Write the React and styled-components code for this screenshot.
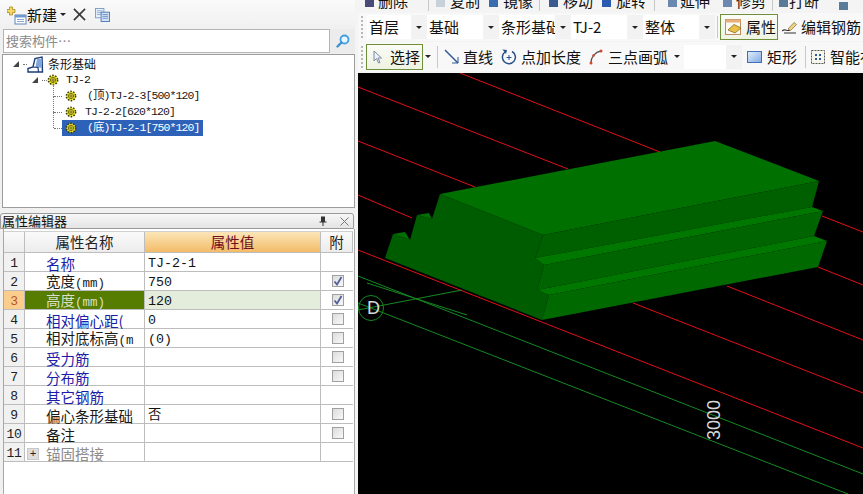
import React from "react";
import styled, { createGlobalStyle } from "styled-components";

const CJK = `"Noto Sans CJK SC", "Liberation Sans", sans-serif`;
const MONO = `"Liberation Mono", "Noto Sans CJK SC", monospace`;

const GlobalStyle = createGlobalStyle`
  * { margin: 0; padding: 0; box-sizing: border-box; }
  html, body { width: 863px; height: 494px; overflow: hidden; background: #f0f0f0; }
  body { font-family: ${CJK}; color: #111; }
`;

const Page = styled.div`
  display: grid;
  grid-template-columns: 355px 508px;
  width: 863px;
  height: 494px;
  overflow: hidden;
`;

/* left column */
const Side = styled.div`
  display: flex;
  flex-direction: column;
  height: 494px;
  background: #f0f0f0;
`;

const TopBar = styled.div`
  display: flex;
  align-items: center;
  height: 29px;
  padding-left: 7px;
  font-size: 15px;
  line-height: 20px;
  background: linear-gradient(#fafafa, #f0f0f0);
`;

const SearchRow = styled.div`
  display: flex;
  height: 24px;
  margin-left: 3px;
`;

const SearchInput = styled.div`
  width: 327px;
  border: 1px solid #b4b4b4;
  background: #fff;
  color: #8a8a8a;
  font-size: 13px;
  line-height: 21px;
  padding-left: 2px;
  white-space: nowrap;
`;

const SearchBtn = styled.div`
  width: 25px;
  display: flex;
  align-items: center;
  justify-content: center;
  background: #ececec;
`;

const TreeBox = styled.div`
  height: 154px;
  margin: 1px 0 0 2px;
  width: 353px;
  border: 1px solid #9c9c9c;
  background: #fff;
  padding-top: 1px;
`;

const TreeRow = styled.div`
  position: relative;
  display: flex;
  align-items: center;
  height: 16px;
  padding-left: ${(p) => p.$indent}px;
`;

const Twist = styled.span`
  width: 0;
  height: 0;
  margin-right: 3px;
  border-style: solid;
  border-width: 0 0 6px 6px;
  border-color: transparent transparent #444 transparent;
`;

const DotsH = styled.span`
  position: absolute;
  left: ${(p) => p.$x}px;
  top: 8px;
  width: ${(p) => p.$w}px;
  border-top: 1px dotted #777;
`;

const DotsV = styled.span`
  position: absolute;
  left: 50px;
  top: ${(p) => p.$top}px;
  height: ${(p) => p.$h}px;
  border-left: 1px dotted #777;
`;

const NodeBox = styled.div`
  display: flex;
  align-items: center;
  height: 16px;
  width: ${(p) => p.$w}px;
  padding-left: 3px;
  background: ${(p) => (p.$selected ? "#2e62b8" : "transparent")};
  color: ${(p) => (p.$selected ? "#fff" : "#1a1a1a")};
`;

const NodeText = styled.span`
  margin-left: ${(p) => p.$gap}px;
  font-family: ${MONO};
  font-size: 11.5px;
  line-height: 16px;
  letter-spacing: -0.9px;
  white-space: nowrap;
`;

const RootText = styled.span`
  margin-left: 4px;
  font-size: 12px;
  line-height: 16px;
  color: #111;
`;

const EditorHead = styled.div`
  display: flex;
  align-items: center;
  height: 16px;
  margin-top: 5px;
  width: 354px;
  border: 1px solid #9a9a9a;
  border-radius: 3px 3px 0 0;
  background: linear-gradient(#f7f7f7, #e4e4e4);
  font-size: 13px;
  padding-left: 1px;
`;

const HeadTitle = styled.span`
  flex: 1;
  line-height: 14px;
`;

const HeadTools = styled.span`
  display: inline-flex;
  align-items: center;
  gap: 13px;
  margin-right: 4px;
`;

const EditorBody = styled.div`
  flex: 1;
  width: 352px;
  margin-left: 3px;
  border-left: 1px solid #a8a8a8;
  border-right: 1px solid #a8a8a8;
  background: #fff;
  padding-top: 2px;
`;

const GRID = "21px 120px 176px 32px";

const HeadRow = styled.div`
  display: grid;
  grid-template-columns: ${GRID};
  grid-template-rows: 20px;
  height: 22px;
  border-bottom: 1px solid #bdbdbd;
  border-top: 1px solid #d0d0d0;
  font-size: 14.5px;
  width: 349px;
`;

const HeadCell = styled.div`
  display: flex;
  align-items: center;
  justify-content: center;
  border-right: 1px solid #bdbdbd;
  line-height: 20px;
  background: ${(p) => (p.$active ? "linear-gradient(#fbe6b8, #f3bb68)" : "linear-gradient(#fafafa, #ececec)")};
  color: ${(p) => (p.$active ? "#6e0f1e" : "#222")};
`;

const Row = styled.div`
  display: grid;
  grid-template-columns: ${GRID};
  grid-template-rows: 18px;
  height: 19px;
  width: 349px;
  border-bottom: 1px solid #bdbdbd;
`;

const NumCell = styled.div`
  display: flex;
  align-items: center;
  justify-content: center;
  padding-top: 3px;
  font-family: ${MONO};
  font-size: 13px;
  line-height: 15px;
  letter-spacing: -0.2px;
  border-right: 1px solid #bdbdbd;
  background: ${(p) => (p.$active ? "#fbcd8c" : "#f1f1f1")};
  color: ${(p) => (p.$active ? "#b4562a" : "#222")};
`;

const NameCell = styled.div`
  display: flex;
  align-items: center;
  padding: 3px 0 0 ${(p) => (p.$expander ? 2 : 21)}px;
  border-right: 1px solid #bdbdbd;
  font-size: 14.5px;
  line-height: 15px;
  white-space: nowrap;
  background: ${(p) => (p.$active ? "#567c00" : "#fff")};
  color: ${(p) => (p.$active ? "#d8e0c8" : p.$tone === "link" ? "#1c1ca8" : p.$tone === "muted" ? "#8c8c8c" : "#1a1a1a")};
`;

const Mm = styled.span`
  font-family: ${MONO};
  font-size: 12.5px;
`;

const ValueCell = styled.div`
  display: flex;
  align-items: center;
  padding: 3px 0 0 3px;
  border-right: 1px solid #bdbdbd;
  font-family: ${MONO};
  font-size: 13.3px;
  line-height: 15px;
  background: ${(p) => (p.$active ? "#e4ecdc" : "#fff")};
`;

const CheckCell = styled.div`
  display: flex;
  align-items: center;
  justify-content: center;
  padding-left: 1px;
`;

const Box = styled.span`
  display: flex;
  align-items: center;
  justify-content: center;
  width: 12px;
  height: 12px;
  border: 1px solid #a0a0a0;
  background: linear-gradient(135deg, #dcdcdc, #f8f8f8);
`;

const Expander = styled.span`
  display: flex;
  align-items: center;
  justify-content: center;
  width: 12px;
  height: 12px;
  margin-right: 7px;
  font-family: ${MONO};
  font-size: 11px;
  line-height: 12px;
  color: #222;
  background: #dedede;
  border: 1px solid #c8c8c8;
`;

/* right column */
const Main = styled.div`
  display: flex;
  flex-direction: column;
  height: 494px;
  padding-left: 3px;
  background: #f4f4f4;
`;

const CutStrip = styled.div`
  display: flex;
  align-items: flex-end;
  height: 11px;
  overflow: hidden;
  flex: none;
  font-size: 15px;
  line-height: 20px;
  background: #f4f4f4;
`;

const Strip = styled.div`
  display: flex;
  align-items: center;
  flex: none;
  height: ${(p) => p.$h}px;
  margin-top: ${(p) => p.$mt}px;
  background: #f8f8f8;
  font-size: 15px;
  line-height: 20px;
  overflow: hidden;
  white-space: nowrap;
`;

const Grip = styled.span`
  width: 2px;
  height: 22px;
  margin: 0 ${(p) => p.$right}px 0 3px;
  flex: none;
  border-left: 2px dotted #b8b8b8;
`;

const Combo = styled.div`
  display: flex;
  flex: none;
  width: ${(p) => p.$w}px;
  margin-left: ${(p) => p.$ml || 0}px;
  height: 24px;
`;

const ComboField = styled.div`
  flex: 1;
  min-width: 0;
  overflow: hidden;
  padding-left: 2px;
  background: #fff;
  line-height: 24px;
  font-family: "Noto Sans CJK SC", "Open Sans", sans-serif;
`;

const ComboArrow = styled.div`
  width: 16px;
  flex: none;
  display: flex;
  align-items: center;
  justify-content: center;
  background: #f2f2f2;
`;

const Caret = styled.span`
  display: inline-block;
  width: 0;
  height: 0;
  flex: none;
  margin-left: ${(p) => p.$ml || 0}px;
  border-style: solid;
  border-width: 3px 3px 0 3px;
  border-color: #222 transparent transparent transparent;
`;

const Sep = styled.span`
  width: 1px;
  height: ${(p) => p.$h || 22}px;
  flex: none;
  margin: 0 ${(p) => p.$r}px 0 ${(p) => p.$l}px;
  background: #c8c8c8;
`;

const Tool = styled.span`
  display: inline-flex;
  align-items: center;
  flex: none;
  gap: ${(p) => p.$gap ?? 4}px;
  margin-left: ${(p) => p.$ml || 0}px;
`;

const ActiveBtn = styled.span`
  display: inline-flex;
  align-items: center;
  flex: none;
  width: ${(p) => p.$w}px;
  height: 26px;
  padding-left: ${(p) => p.$pl}px;
  gap: ${(p) => p.$gap}px;
  margin-left: ${(p) => p.$ml || 0}px;
  border: 1px solid #6f8f3c;
  background: linear-gradient(#fbfcf6, #eef3e2);
`;

const Canvas = styled.div`
  flex: 1;
  margin-top: 2px;
  background: #000;
  overflow: hidden;
`;

const Scene = styled.svg`
  display: block;
  width: 505px;
  height: 421px;
`;

/* icons */
const Gear = () => (
  <svg width="12" height="12" viewBox="0 0 12 12">
    <circle cx="6" cy="6" r="4.6" fill="#f2ea2a" stroke="#3d3d00" strokeWidth="1.6" strokeDasharray="1.6 1.3" />
    <circle cx="6" cy="6" r="2.6" fill="#f5ef5a" stroke="#5c5600" strokeWidth="0.8" />
    <path d="M6 3.5v5M3.5 6h5" stroke="#5c5600" strokeWidth="0.8" />
  </svg>
);

const FoundationIcon = () => (
  <svg width="17" height="17" viewBox="0 0 17 17">
    <path d="M1 16 V12.5 L6 11 L8 2.5 L15 1 L15.5 16 Z" fill="#fff" stroke="#1c3c78" strokeWidth="1.4" />
    <path d="M10 3 L8.5 11 L15 12 V3 Z" fill="#7fa6d8" />
    <path d="M6 11 L11 11.5 L11.5 16" fill="none" stroke="#1c3c78" strokeWidth="1.2" />
  </svg>
);

const NewIcon = () => (
  <svg width="20" height="20" viewBox="0 0 20 20">
    <path d="M2.5 2h3v2.5H8v3H5.5V10h-3V7.500H0v-3h2.500z" fill="#f6d866" stroke="#a88a20" strokeWidth="0.8" />
    <rect x="8" y="10" width="11" height="9" fill="#fff" stroke="#5f86b8" />
    <rect x="8" y="10" width="11" height="2.500" fill="#6e9ad0" />
    <path d="M10 14.500h7M10 16.500h7" stroke="#8aa8cc" />
  </svg>
);

const CloseIcon = () => (
  <svg width="13" height="13" viewBox="0 0 14 14">
    <path d="M1 1 L13 13 M13 1 L1 13" stroke="#3a3a3a" strokeWidth="1.800" />
  </svg>
);

const CopyIcon = () => (
  <svg width="15" height="14" viewBox="0 0 16 15">
    <rect x="0.500" y="0.500" width="9" height="10" fill="#e8f0fa" stroke="#7d9cc6" />
    <path d="M2 3h6M2 5h6M2 7h6" stroke="#92aed2" />
    <rect x="6.500" y="4.500" width="9" height="10" fill="#d3e2f6" stroke="#4f7ab4" />
    <path d="M8 7h6M8 9h6M8 11h6" stroke="#6f95c8" />
  </svg>
);

const SearchIcon = () => (
  <svg width="14" height="14" viewBox="0 0 14 14">
    <circle cx="8.500" cy="5.500" r="4" fill="#eaf6ff" stroke="#3f9fe0" strokeWidth="1.800" />
    <path d="M5.500 8.500 L1.500 12.500" stroke="#3f8fd0" strokeWidth="2.400" strokeLinecap="round" />
  </svg>
);

const PinIcon = () => (
  <svg width="8" height="10" viewBox="0 0 8 10">
    <path d="M2 0.500h4v5h1.500v1h-3V10h-1V6.500h-3v-1H2z" fill="#333" />
  </svg>
);

const SmallX = () => (
  <svg width="9" height="9" viewBox="0 0 9 9">
    <path d="M0.500 0.500 L8.500 8.500 M8.500 0.500 L0.500 8.500" stroke="#777" />
  </svg>
);

const Tick = () => (
  <svg width="10" height="10" viewBox="0 0 10 10">
    <path d="M1.500 5.500 L4 8.500 L8.500 1" fill="none" stroke="#51609c" strokeWidth="1.800" />
  </svg>
);

const AttrIcon = () => (
  <svg width="18" height="17" viewBox="0 0 18 17">
    <rect x="0.500" y="0.500" width="15" height="15" fill="#fbfaf0" stroke="#c08a60" />
    <rect x="0.500" y="0.500" width="15" height="3" fill="#e8b080" />
    <path d="M3 11 L9 5.500 L16 9 L10 14 Z" fill="#e9c04a" stroke="#8a6a20" strokeWidth="0.800" />
  </svg>
);

const EditRebarIcon = () => (
  <svg width="15" height="13" viewBox="0 0 15 13">
    <path d="M0 10 C3 7 5 11 8 9" fill="none" stroke="#333" strokeWidth="1.200" />
    <path d="M6 8 L12 1.500 L14.500 3.500 L8.500 9.500 Z" fill="#ecd28a" stroke="#8f7a3a" strokeWidth="0.800" />
    <path d="M2 12 H14" stroke="#333" />
  </svg>
);

const PointerIcon = () => (
  <svg width="10" height="14" viewBox="0 0 10 14">
    <path d="M1 1 V11 L3.500 8.500 L5.500 13 L7 12.500 L5 8 H8.500 Z" fill="#eef2fa" stroke="#7d8aa6" />
  </svg>
);

const LineIcon = () => (
  <svg width="15" height="15" viewBox="0 0 15 15">
    <path d="M1 1 L14 14" stroke="#2d5d96" strokeWidth="1.500" />
    <path d="M14 8 V14 H8" fill="none" stroke="#2d5d96" strokeWidth="1" />
  </svg>
);

const LengthIcon = () => (
  <svg width="16" height="16" viewBox="0 0 16 16">
    <path d="M11 2.500 A6.500 6.500 0 1 1 4 3" fill="none" stroke="#28508c" strokeWidth="1.500" />
    <path d="M1.500 0.500 L6 1 L5 5 Z" fill="#28508c" />
    <path d="M8 6v5M5.500 8.500h5" stroke="#28508c" />
  </svg>
);

const ArcIcon = () => (
  <svg width="14" height="16" viewBox="0 0 14 16">
    <path d="M2 14 C2 8 6 3 12 2" fill="none" stroke="#555" strokeWidth="1.300" />
    <circle cx="2" cy="14" r="1.500" fill="#d0492e" />
    <circle cx="4.500" cy="6.500" r="1.300" fill="#d0492e" />
    <circle cx="12" cy="2" r="1.500" fill="#d0492e" />
  </svg>
);

const RectIcon = () => (
  <svg width="15" height="12" viewBox="0 0 15 12">
    <defs>
      <linearGradient id="rectFill" x1="0" y1="0" x2="1" y2="1">
        <stop offset="0" stopColor="#e6f0fc" />
        <stop offset="1" stopColor="#7fa8e2" />
      </linearGradient>
    </defs>
    <rect x="0.500" y="0.500" width="14" height="11" fill="url(#rectFill)" stroke="#3f6fb8" />
  </svg>
);

const SmartIcon = () => (
  <svg width="14" height="14" viewBox="0 0 14 14">
    <rect x="0.500" y="0.500" width="13" height="13" fill="#f5f5ec" stroke="#555" strokeDasharray="2 1" />
    <path d="M4 4h2v2H4zM8 4h2v2H8zM4 8h2v2H4zM8 8h2v2H8z" fill="#2c5a98" />
  </svg>
);

const Mini = ({ color }) => (
  <svg width="11" height="13" viewBox="0 0 11 13">
    <path d="M1 4h9v8H1z" fill={color} />
  </svg>
);

const treeItems = [
  { text: "(顶)TJ-2-3[500*120]", gap: 6 },
  { text: "TJ-2-2[620*120]", gap: 4 },
  { text: "(底)TJ-2-1[750*120]", gap: 6, selected: true },
];

const rows = [
  { n: 1, name: "名称", tone: "link", value: "TJ-2-1" },
  { n: 2, name: "宽度", mm: "(mm)", value: "750", check: "on" },
  { n: 3, name: "高度", mm: "(mm)", value: "120", check: "on", active: true },
  { n: 4, name: "相对偏心距(", tone: "link", value: "0", check: "off" },
  { n: 5, name: "相对底标高", mm: "(m", value: "(0)", check: "off" },
  { n: 6, name: "受力筋", tone: "link", check: "off" },
  { n: 7, name: "分布筋", tone: "link", check: "off" },
  { n: 8, name: "其它钢筋", tone: "link" },
  { n: 9, name: "偏心条形基础", value: "否", check: "off" },
  { n: 10, name: "备注", check: "off" },
  { n: 11, name: "锚固搭接", tone: "muted", expander: true },
];

const combos = [
  { w: 60, text: "首层" },
  { w: 72, text: "基础" },
  { w: 72, text: "条形基础" },
  { w: 72, text: "TJ-2" },
  { w: 72, text: "整体" },
];

const redLines = [
  [460, 73, 660, 152],
  [358, 87, 568, 169],
  [358, 141, 475, 187],
  [358, 195, 412, 218],
  [358, 250, 863, 448],
  [822, 216, 863, 232],
  [818, 267, 863, 285],
  [727, 286, 863, 340],
  [633, 303, 863, 393],
];

const greenLines = [
  [358, 276, 863, 474],
  [358, 303, 848, 494],
  [367, 283, 467, 315],
  [358, 310, 462, 290],
];

const faces = [
  { fill: "#005c00", d: "M440 194 L543 235 L535 258 L544 265 L537 290 L549 295 L542 320 L385 258 L393 234 L410 240 L417 215 L432 219 Z" },
  { fill: "#006e00", d: "M393 234 L405 232 L410 240 Z" },
  { fill: "#006e00", d: "M417 215 L429 213 L432 219 Z" },
  { fill: "#007000", d: "M440 194 L715 141 L819 181 L543 235 Z" },
  { fill: "#006000", d: "M543 235 L819 181 L812 207 L535 258 Z" },
  { fill: "#007800", d: "M535 258 L812 207 L823 211 L544 265 Z" },
  { fill: "#006400", d: "M544 265 L823 211 L814 236 L537 290 Z" },
  { fill: "#007800", d: "M537 290 L814 236 L827 241 L549 295 Z" },
  { fill: "#006a00", d: "M549 295 L827 241 L818 267 L542 320 Z" },
];

const Segment = ({ line, color }) => (
  <line x1={line[0]} y1={line[1]} x2={line[2]} y2={line[3]} stroke={color} strokeWidth="1" />
);

export default function App() {
  return (
    <>
      <GlobalStyle />
      <Page>
        <Side>
          <TopBar>
            <NewIcon />
            <Tool $gap={3}>新建<Caret /></Tool>
            <Tool $ml={7}><CloseIcon /></Tool>
            <Tool $ml={9}><CopyIcon /></Tool>
          </TopBar>
          <SearchRow>
            <SearchInput>搜索构件…</SearchInput>
            <SearchBtn><SearchIcon /></SearchBtn>
          </SearchRow>
          <TreeBox>
            <TreeRow $indent={10}>
              <Twist />
              <DotsH $x={20} $w={4} />
              <Tool $ml={5}><FoundationIcon /></Tool>
              <RootText>条形基础</RootText>
            </TreeRow>
            <TreeRow $indent={29}>
              <Twist />
              <DotsH $x={39} $w={5} />
              <Tool $ml={6}><Gear /></Tool>
              <NodeText $gap={7}>TJ-2</NodeText>
            </TreeRow>
            {treeItems.map((item, i) => (
              <TreeRow key={item.text} $indent={59}>
                <DotsV $top={i === 0 ? -7 : -8} $h={16} />
                <DotsH $x={51} $w={8} />
                <NodeBox $w={item.selected ? 141 : 160} $selected={item.selected}>
                  <Gear />
                  <NodeText $gap={item.gap + 4}>{item.text}</NodeText>
                </NodeBox>
              </TreeRow>
            ))}
          </TreeBox>
          <EditorHead>
            <HeadTitle>属性编辑器</HeadTitle>
            <HeadTools><PinIcon /><SmallX /></HeadTools>
          </EditorHead>
          <EditorBody>
            <HeadRow>
              <HeadCell />
              <HeadCell>属性名称</HeadCell>
              <HeadCell $active>属性值</HeadCell>
              <HeadCell>附</HeadCell>
            </HeadRow>
            {rows.map((r) => (
              <Row key={r.n}>
                <NumCell $active={r.active}>{r.n}</NumCell>
                <NameCell $active={r.active} $tone={r.tone} $expander={r.expander}>
                  {r.expander && <Expander>+</Expander>}
                  <span>
                    {r.name}
                    {r.mm && <Mm>{r.mm}</Mm>}
                  </span>
                </NameCell>
                <ValueCell $active={r.active}>{r.value}</ValueCell>
                <CheckCell>
                  {r.check && <Box>{r.check === "on" && <Tick />}</Box>}
                </CheckCell>
              </Row>
            ))}
          </EditorBody>
        </Side>
        <Main>
          <CutStrip>
            <Tool $ml={6} $gap={3}><Mini color="#4a4a78" />删除</Tool>
            <Sep $l={20} $r={6} $h={11} />
            <Tool><Mini color="#c8d0d8" />复制</Tool>
            <Tool $ml={8}><Mini color="#3a6cb0" />镜像</Tool>
            <Sep $l={6} $r={8} $h={11} />
            <Tool><Mini color="#3a5a90" />移动</Tool>
            <Tool $ml={8}><Mini color="#2a5ab0" />旋转</Tool>
            <Sep $l={8} $r={12} $h={11} />
            <Tool $gap={2}><Mini color="#6a88b0" />延伸</Tool>
            <Tool $ml={12} $gap={3}><Mini color="#6a88b0" />修剪</Tool>
            <Sep $l={6} $r={5} $h={11} />
            <Tool $gap={0}><Mini color="#5a7a9a" />打断</Tool>
            <Tool $ml={19}><Mini color="#5a7a9a" /></Tool>
          </CutStrip>
          <Strip $h={28} $mt={2}>
            <Grip $right={4} />
            {combos.map((c) => (
              <Combo key={c.text} $w={c.w}>
                <ComboField>{c.text}</ComboField>
                <ComboArrow><Caret /></ComboArrow>
              </Combo>
            ))}
            <Sep $l={2} $r={2} />
            <ActiveBtn $w={58} $pl={4} $gap={3}><AttrIcon />属性</ActiveBtn>
            <Tool $ml={4} $gap={4}><EditRebarIcon />编辑钢筋</Tool>
          </Strip>
          <Strip $h={29} $mt={1}>
            <Grip $right={3} />
            <ActiveBtn $w={57} $pl={6} $gap={7}><PointerIcon />选择</ActiveBtn>
            <Caret $ml={2} />
            <Sep $l={6} $r={6} />
            <Tool><LineIcon />直线</Tool>
            <Tool $ml={8}><LengthIcon />点加长度</Tool>
            <Tool $ml={8} $gap={5}><ArcIcon />三点画弧</Tool>
            <Caret $ml={6} />
            <Combo $w={58} $ml={4}>
              <ComboField />
              <ComboArrow><Caret /></ComboArrow>
            </Combo>
            <Tool $ml={5} $gap={5}><RectIcon />矩形</Tool>
            <Sep $l={8} $r={5} />
            <Tool $gap={5}><SmartIcon />智能布置</Tool>
          </Strip>
          <Canvas>
            <Scene viewBox="358 73 505 421">
              {redLines.map((l) => <Segment key={l.join()} line={l} color="#e01018" />)}
              {greenLines.map((l) => <Segment key={l.join()} line={l} color="#148a22" />)}
              <circle cx="371" cy="308" r="12.500" fill="none" stroke="#148a22" />
              {faces.map((f) => <path key={f.d} d={f.d} fill={f.fill} />)}
              <text x="367" y="314" fontFamily="Liberation Sans" fontSize="18" fill="#d8d8d8">D</text>
              <text
                transform="translate(720 440) rotate(-90)"
                fontFamily="Liberation Sans"
                fontSize="18"
                fill="#d8d8d8"
              >
                3000
              </text>
            </Scene>
          </Canvas>
        </Main>
      </Page>
    </>
  );
}
